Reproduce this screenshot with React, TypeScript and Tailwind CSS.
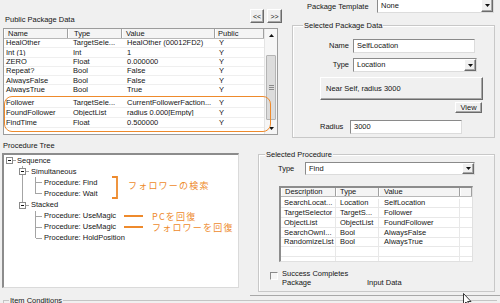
import React from "react";

const RAISED =
  "bg-[#f0f0f0] border border-t-white border-l-white border-r-[#6b6b6b] border-b-[#6b6b6b] shadow-[inset_-1px_-1px_0_#a8a8a8]";
const SUNKEN =
  "bg-white border border-t-[#8a8a8a] border-l-[#8a8a8a] border-r-[#dcdcdc] border-b-[#dcdcdc]";

function Arrow({ up = false }: { up?: boolean }) {
  return (
    <svg width="5" height="3" viewBox="0 0 5 3">
      <path d={up ? "M0 3h5L2.5 0z" : "M0 0h5L2.5 3z"} fill="#111" />
    </svg>
  );
}

function Combo({ className, text }: { className: string; text: string }) {
  return (
    <div className={`${className} ${SUNKEN} flex items-stretch`}>
      <span className="pl-[3px] flex-1 flex items-center">{text}</span>
      <div className={`${RAISED} w-[12px] flex items-center justify-center`}>
        <Arrow />
      </div>
    </div>
  );
}

const pubRows = [
  ["HealOther", "TargetSele...", "HealOther (00012FD2)", "Y"],
  ["Int (1)", "Int", "1", "Y"],
  ["ZERO", "Float", "0.000000", "Y"],
  ["Repeat?", "Bool", "False", "Y"],
  ["AlwaysFalse", "Bool", "False", "Y"],
  ["AlwaysTrue", "Bool", "True", "Y"],
];
const pubRows2 = [
  ["Follower", "TargetSele...", "CurrentFollowerFaction...", "Y"],
  ["FoundFollower", "ObjectList", "radius 0.000[Empty]", "Y"],
  ["FindTime", "Float", "0.500000", "Y"],
];

const procRows = [
  ["SearchLocat...", "Location", "SelfLocation"],
  ["TargetSelector", "TargetS...", "Follower"],
  ["ObjectList", "ObjectList", "FoundFollower"],
  ["SearchOwnI...", "Bool", "AlwaysFalse"],
  ["RandomizeList", "Bool", "AlwaysTrue"],
  ["", "", ""],
  ["", "", ""],
];

function PubRow({ r, h }: { r: string[]; h: string }) {
  return (
    <div className={`flex ${h} items-center border-b border-[#efefef]`}>
      <div className="w-[64px] pl-[2px] whitespace-nowrap overflow-hidden">{r[0]}</div>
      <div className="w-[54px] pl-[5px] whitespace-nowrap overflow-hidden">{r[1]}</div>
      <div className="w-[93px] pl-[5px] whitespace-nowrap overflow-hidden">{r[2]}</div>
      <div className="w-[49px] pl-[4px]">{r[3]}</div>
    </div>
  );
}

const headCell = "h-full flex items-center border-r border-[#a0a0a0] shadow-[inset_1px_0_0_#fff]";

export default function App() {
  return (
    <div className="w-[500px] h-[303px] bg-[#f0f0f0] overflow-hidden relative font-['Liberation_Sans',Arial,sans-serif] text-[7.5px] leading-none text-[#151515]">
      {/* TOP SECTION */}
      <div className="flex h-[140px]">
        {/* Public package data */}
        <div className="w-[282px] pl-[3px] flex flex-col">
          <div className="h-[28px] flex items-start">
            <span className="mt-[15.5px] ml-[2px]">Public Package Data</span>
            <div className="ml-auto mt-[9px] flex gap-[3px]">
              <div className={`${RAISED} w-[14px] h-[14px] flex items-center justify-center text-[7px]`}>&lt;&lt;</div>
              <div className={`${RAISED} w-[15px] h-[14px] flex items-center justify-center text-[7px]`}>&gt;&gt;</div>
            </div>
          </div>
          <div className="relative w-[275px] h-[107px] border border-[#9c9c9c] bg-white flex">
            <div className="w-[260px] flex flex-col">
              <div className="h-[10px] flex bg-[#f4f4f4] border-b border-[#b8b8b8]">
                <div className={`${headCell} w-[64px] pl-[4px]`}>Name</div>
                <div className={`${headCell} w-[54px] pl-[6px]`}>Type</div>
                <div className={`${headCell} w-[93px] pl-[4px]`}>Value</div>
                <div className={`${headCell} w-[49px] pl-[3px]`}>Public</div>
              </div>
              <div className="h-[54.5px] overflow-hidden">
                {pubRows.map((r, i) => (
                  <PubRow key={i} r={r} h="h-[9.3px]" />
                ))}
              </div>
              <div className="mt-[4.5px]">
                {pubRows2.map((r, i) => (
                  <PubRow key={i} r={r} h="h-[10px]" />
                ))}
              </div>
            </div>
            {/* scrollbar */}
            <div className="w-[13px] h-full bg-[#f6f6f6] border-l border-[#e4e4e4] flex flex-col">
              <div className="h-[12px] flex items-center justify-center">
                <Arrow up />
              </div>
              <div className="flex-1 relative">
                <div className="absolute left-[1px] right-[1px] top-[14px] h-[65px] bg-[#dcdcdc] border border-[#b4b4b4] rounded-[1px] flex flex-col items-center justify-center gap-[1px]">
                  <div className="w-[5px] h-px bg-[#8a8a8a]" />
                  <div className="w-[5px] h-px bg-[#8a8a8a]" />
                  <div className="w-[5px] h-px bg-[#8a8a8a]" />
                </div>
              </div>
              <div className="h-[12px] flex items-center justify-center">
                <Arrow />
              </div>
            </div>
            {/* orange highlight */}
            <div className="absolute left-0 top-[67px] w-[267px] h-[36px] border-[1.5px] border-[#ee8a2c] rounded-[8px]" />
          </div>
        </div>

        {/* Right top */}
        <div className="ml-[10px] w-[203px] flex flex-col">
          <div className="flex h-[13px]">
            <span className="ml-[15px] mt-[2.5px]">Package Template</span>
            <Combo className="ml-auto mr-[1px] w-[117px] h-[15px] -mt-[2px]" text="None" />
          </div>
          <div className="relative mt-[12px] h-[113px] border border-[#c8c8c8] shadow-[inset_1px_1px_0_#fff] flex flex-col">
            <span className="absolute -top-[4px] left-[10px] bg-[#f0f0f0] px-[1px]">Selected Package Data</span>
            <div className="flex items-center h-[14px] mt-[13px]">
              <span className="w-[56px] text-right">Name</span>
              <div className={`${SUNKEN} ml-[4px] w-[122px] h-full flex items-center pl-[3px]`}>SelfLocation</div>
            </div>
            <div className="flex items-center h-[14px] mt-[5px]">
              <span className="w-[56px] text-right">Type</span>
              <Combo className="ml-[4px] w-[124px] h-full" text="Location" />
            </div>
            <div className={`${RAISED} mt-[5px] ml-[27px] w-[163px] h-[23px] flex items-center pl-[5px]`}>
              Near Self, radius 3000
            </div>
            <div className={`${RAISED} mt-[2px] ml-[162px] w-[27px] h-[11px] flex items-center justify-center`}>View</div>
            <div className="flex items-center h-[14px] mt-[7px]">
              <span className="ml-[27px] w-[30px]">Radius</span>
              <div className={`${SUNKEN} w-[112px] h-full flex items-center pl-[3px]`}>3000</div>
            </div>
          </div>
        </div>
      </div>

      {/* BOTTOM SECTION */}
      <div className="flex h-[155px]">
        <div className="w-[240px] flex flex-col">
          <div className="h-[13px] pt-[1.5px] pl-[3px]">Procedure Tree</div>
          <div className="relative ml-[2px] w-[237px] h-[135px] bg-white border-t-2 border-l-2 border-[#8c8c8c] border-r border-b border-r-[#dadada] border-b-[#dadada]">
            <svg className="absolute left-0 top-0" width="235" height="133" viewBox="0 0 235 133">
              <g stroke="#a4a4a4" strokeWidth="1" fill="none" shapeRendering="crispEdges">
                <path d="M8.5 5.5H11.5" />
                <path d="M18.5 11V13.5M18.5 19.5V47M21.5 16.5H25M21.5 50H25" />
                <path d="M31.5 22V38.85M31.5 27.75H38M31.5 38.85H38" />
                <path d="M31.5 55.5V83.25M31.5 61.05H38M31.5 72.15H38M31.5 83.25H38" />
              </g>
              <g stroke="#8a8a8a" fill="#fff" shapeRendering="crispEdges">
                <rect x="2.5" y="2.5" width="6" height="6" />
                <rect x="15.5" y="13.5" width="6" height="6" />
                <rect x="15.5" y="47" width="6" height="6" />
              </g>
              <g stroke="#111" shapeRendering="crispEdges">
                <path d="M4 5.5H7M17 16.5H20M17 50H20" />
              </g>
              <g stroke="#ee8a2c" strokeWidth="1.8" fill="none">
                <path d="M108 22H113V43H108" />
                <path d="M120 61H139M120 72H139" />
              </g>
            </svg>
            <div className="relative flex flex-col">
              <div className="h-[11.1px] flex items-center pl-[13px]">Sequence</div>
              <div className="h-[11.1px] flex items-center pl-[27px]">Simultaneous</div>
              <div className="h-[11.1px] flex items-center pl-[40px]">Procedure: Find</div>
              <div className="h-[11.1px] flex items-center pl-[40px]">Procedure: Wait</div>
              <div className="h-[11.1px] flex items-center pl-[27px]">Stacked</div>
              <div className="h-[11.1px] flex items-center pl-[40px]">Procedure: UseMagic</div>
              <div className="h-[11.1px] flex items-center pl-[40px]">Procedure: UseMagic</div>
              <div className="h-[11.1px] flex items-center pl-[40px]">Procedure: HoldPosition</div>
            </div>
            <span className="absolute left-[124px] top-[25.5px] h-[9px] leading-none flex items-center font-['Noto_Sans_CJK_JP',sans-serif] text-[9px] tracking-[1.2px] text-[#ee8a2c]">フォロワーの検索</span>
            <span className="absolute left-[148px] top-[56.5px] h-[9px] leading-none flex items-center font-['Noto_Sans_CJK_JP',sans-serif] text-[9px] tracking-[1.2px] text-[#ee8a2c]">PCを回復</span>
            <span className="absolute left-[148px] top-[67.5px] h-[9px] leading-none flex items-center font-['Noto_Sans_CJK_JP',sans-serif] text-[9px] tracking-[1.2px] text-[#ee8a2c]">フォロワーを回復</span>
          </div>
        </div>

        {/* Selected procedure */}
        <div className="relative ml-[18px] mt-[14px] w-[237px] h-[138px] border border-[#c8c8c8] shadow-[inset_1px_1px_0_#fff] flex flex-col">
          <span className="absolute -top-[4px] left-[6px] bg-[#f0f0f0] px-[1px]">Selected Procedure</span>
          <div className="flex items-center mt-[7px] h-[13px]">
            <span className="ml-[19px] w-[27px]">Type</span>
            <Combo className="w-[170px] h-full" text="Find" />
          </div>
          <div className="mt-[11px] ml-[20px] w-[194px] h-[76px] bg-white border-t-2 border-l-2 border-[#8c8c8c] border-r border-b border-r-[#e0e0e0] border-b-[#e0e0e0] flex flex-col overflow-hidden">
            <div className="h-[10px] flex bg-[#f4f4f4] border-b border-[#b8b8b8]">
              <div className={`${headCell} w-[55px] pl-[4px]`}>Description</div>
              <div className={`${headCell} w-[43px] pl-[4px]`}>Type</div>
              <div className={`${headCell} w-[81px] pl-[5px]`}>Value</div>
              <div className={`${headCell} w-[12px]`} />
            </div>
            <div className="mt-[2px]">
              {procRows.map((r, i) => (
                <div key={i} className="flex h-[9.8px] border-b border-[#e8e8e8]">
                  <div className="w-[55px] pl-[3px] flex items-center border-r border-[#e8e8e8] whitespace-nowrap">{r[0]}</div>
                  <div className="w-[43px] pl-[4px] flex items-center border-r border-[#e8e8e8] whitespace-nowrap">{r[1]}</div>
                  <div className="w-[81px] pl-[5px] flex items-center border-r border-[#e8e8e8] whitespace-nowrap">{r[2]}</div>
                  <div className="w-[12px]" />
                </div>
              ))}
            </div>
          </div>
          <div className="flex mt-[6.8px] ml-[11px]">
            <div className="mt-[3px] w-[8px] h-[8px] bg-[#f6f6f6] border border-t-[#8a8a8a] border-l-[#8a8a8a] border-r-white border-b-white" />
            <div className="ml-[4px] flex flex-col leading-[9px]">
              <span>Success Completes</span>
              <div className="flex">
                <span className="w-[85px]">Package</span>
                <span>Input Data</span>
              </div>
            </div>
          </div>
        </div>
      </div>

      {/* bottom strip */}
      <div className="ml-[250px] h-px bg-[#a8a8a8]" />
      <div className="relative mt-[4px] ml-[3px] mr-[3px] h-[10px] border-t border-l border-[#c4c4c4]">
        <span className="absolute -top-[4px] left-[5px] bg-[#f0f0f0] px-[1px]">Item Conditions</span>
      </div>

      {/* mouse cursor */}
      <svg className="absolute left-[463px] top-[293px]" width="10" height="14" viewBox="0 0 10 14">
        <path d="M0.5 0.5V11.5L3 9L5 13L6.5 12.3L4.6 8.5H8Z" fill="#fff" stroke="#222" strokeWidth="0.9" />
      </svg>
    </div>
  );
}
